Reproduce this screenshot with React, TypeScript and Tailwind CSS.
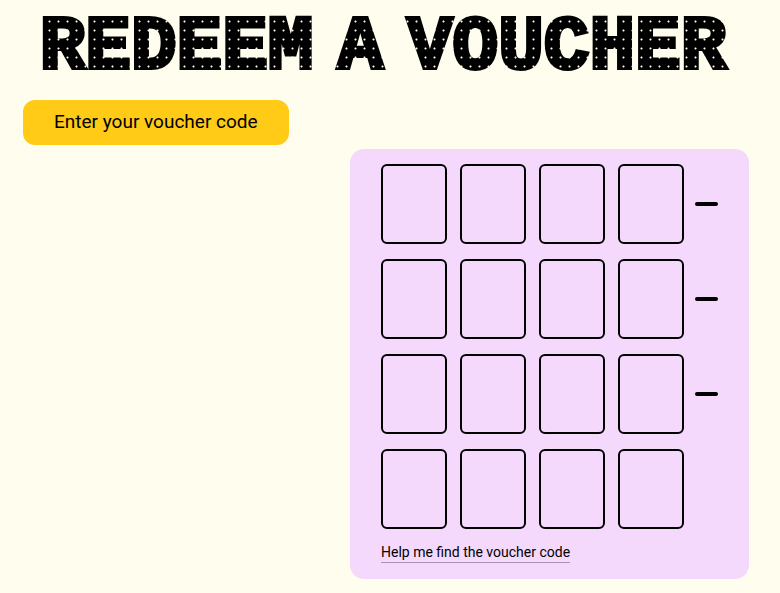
const titleWords = ["REDEEM", "A", "VOUCHER"];
const groups = [0, 1, 2, 3];
const cells = [0, 1, 2, 3];

function Title() {
  return (
    <h1 className="flex justify-center gap-4 whitespace-nowrap pr-[14px] pt-2 font-['Liberation_Mono',monospace] text-[76px] font-bold leading-[80px] text-transparent">
      {titleWords.map((word) => (
        <span
          key={word}
          className="bg-[radial-gradient(circle_at_center,#fffeee_0.5px,#000_1.5px)] bg-[length:9px_9px] bg-clip-text px-1 [-webkit-text-stroke:4px_transparent]"
        >
          {word}
        </span>
      ))}
    </h1>
  );
}

function CodeRow({ group }: { group: number }) {
  return (
    <div className="flex items-center gap-[13px]">
      {cells.map((cell) => (
        <input
          key={cell}
          type="text"
          maxLength={1}
          aria-label={`Voucher code character ${group * 4 + cell + 1}`}
          className="h-20 w-[66px] rounded-md border-2 border-black bg-transparent text-center text-3xl uppercase"
        />
      ))}
      {group < 3 && <span className="-ml-0.5 h-1 w-[23px] rounded-sm bg-black" />}
    </div>
  );
}

export default function App() {
  return (
    <main className="min-h-screen bg-[#fffeee] pb-[15px] font-['Roboto','Liberation_Sans',sans-serif] text-black">
      <Title />
      <div className="px-[23px] pt-3">
        <button type="button" className="block h-[45px] rounded-xl bg-[#ffcb17] px-[31px] pb-0.5 text-[19px] leading-6">
          Enter your voucher code
        </button>
      </div>
      <form className="ml-auto mr-[31px] mt-1 w-fit rounded-[14px] bg-[#f4d9fd] px-[31px] pb-[15px] pt-[15px]">
        <div className="flex flex-col gap-[15px]">
          {groups.map((group) => (
            <CodeRow key={group} group={group} />
          ))}
        </div>
        <a href="#help" className="mt-[13px] inline-block border-b border-[#a993b0] text-[14px] leading-5">
          Help me find the voucher code
        </a>
      </form>
    </main>
  );
}
